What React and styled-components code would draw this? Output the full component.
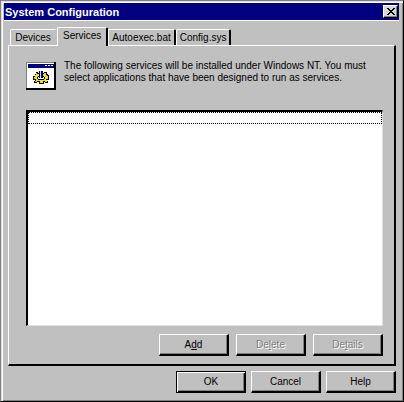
import React, { useState } from 'react';
import styled, { createGlobalStyle, css } from 'styled-components';

const GlobalStyle = createGlobalStyle`
  * {
    box-sizing: border-box;
  }

  body {
    margin: 0;
    background: #c0c0c0;
    color: #000;
    font: 10px/12px "Liberation Sans", Arial, sans-serif;
  }
`;

const raised = css`
  border: 1px solid;
  border-color: #fff #000 #000 #fff;
  box-shadow: inset -1px -1px #808080;
`;

const Dialog = styled.main`
  display: flex;
  flex-direction: column;
  min-height: 100vh;
  padding: 1px 2px 1px 2px;
  background: #c0c0c0;
  border: 1px solid;
  border-color: #808080 #000 #000 #808080;
  box-shadow: inset 1px 1px #dfdfdf, inset 2px 2px #fff, inset -1px -1px #808080;
`;

const TitleBar = styled.header`
  display: flex;
  align-items: center;
  justify-content: space-between;
  height: 18px;
  margin: 1px 2px 0 1px;
  padding: 0 1px;
  background: #000080;
  border-bottom: 1px solid #fff;
  color: #fff;
`;

const Title = styled.h1`
  margin: 0;
  font-size: 11px;
  line-height: 16px;
`;

const CloseButton = styled.button`
  display: flex;
  align-items: center;
  justify-content: center;
  width: 15px;
  height: 13px;
  padding: 0;
  background: #d8d8d0;
  ${raised}
`;

const Body = styled.div`
  display: flex;
  flex: 1;
  flex-direction: column;
  padding: 6px 5px 7px 5px;
`;

const TabList = styled.div`
  display: flex;
  align-items: flex-end;
  padding-left: 2px;
`;

const Tab = styled.button`
  height: ${props => (props.$active ? 19 : 16)}px;
  min-width: 47px;
  margin-bottom: ${props => (props.$active ? -1 : 0)}px;
  padding: ${props => (props.$active ? '0 5px 3px' : '0 3px')};
  position: relative;
  z-index: ${props => (props.$active ? 1 : 0)};
  background: #c0c0c0;
  border: solid;
  border-width: 1px 2px 0 1px;
  border-color: #fff #000 #fff #fff;
  border-radius: 2px 2px 0 0;
  font: inherit;
  white-space: nowrap;

  &:has(+ [aria-selected='true']) {
    border-right-color: #c0c0c0;
  }
`;

const Panel = styled.section`
  display: flex;
  flex: 1;
  flex-direction: column;
  padding: 14px 11px 8px 17px;
  border: solid;
  border-width: 1px 2px 2px 1px;
  border-color: #fff #000 #000 #fff;
`;

const Intro = styled.div`
  display: flex;
  gap: 8px;
  margin-bottom: 20px;
`;

const IntroIcon = styled.svg`
  flex: none;
  width: 30px;
  height: 28px;
  margin-top: 2px;
`;

const IntroText = styled.p`
  margin: 0;
`;

const ServiceList = styled.ul`
  flex: 1;
  margin: 0 0 8px;
  padding: 0;
  list-style: none;
  background: #fff;
  border: solid;
  border-width: 2px 1px 1px 2px;
  border-color: #000 #dfdfdf #dfdfdf #000;
  outline: none;
`;

const ServiceRow = styled.li`
  height: 12px;
  border: 1px dotted #000;
`;

const ButtonRow = styled.div`
  display: flex;
  justify-content: flex-end;
  gap: ${props => props.$gap}px;
  margin-top: ${props => props.$top || 0}px;
`;

const Button = styled.button`
  width: 70px;
  height: 22px;
  padding: 0;
  background: #c0c0c0;
  font: inherit;
  ${raised}
  border-width: 1px 2px 2px 1px;

  ${props =>
    props.$primary &&
    css`
      border: 1px solid #000;
      box-shadow: inset 1px 1px #fff, inset -1px -1px #000, inset -2px -2px #808080;
    `}

  &:disabled {
    color: #808080;
    text-shadow: 1px 1px #fff;
  }
`;

const tabs = ['Devices', 'Services', 'Autoexec.bat', 'Config.sys'];

const ServicesIcon = () => (
  <IntroIcon viewBox="0 0 30 28" shapeRendering="crispEdges" aria-hidden="true">
    <rect width="30" height="28" fill="#000" />
    <rect width="28" height="26" fill="#808080" />
    <rect x="1" y="1" width="27" height="25" fill="#fff" />
    <rect x="2" y="2" width="26" height="4" fill="#000080" />
    <path d="M19 3h2v1h-2zM22 3h2v1h-2zM25 3h2v1h-2z" fill="#fff" />
    <path
      d="M10 10h2v1h6v-1h3v2h1v1h1v5h-2v1h1v2h-3v-1h-1v2h-5v-2h-2v1H8v-2h1v-1H7v-4h2v-2h1z"
      fill="#000"
    />
    <path
      d="M10 11h1v1h7v-1h2v2h1v1h1v3h-2v1h1v2h-2v-1h-2v2h-3v-2h-3v1H9v-1h1v-2H8v-2h1v-2h1z"
      fill="#f0e010"
    />
    <path d="M12 14h6v1h1v2h-1v1h-6v-1h-1v-2h1z" fill="#000" />
    <path d="M12 15h6v2h-6z" fill="#fff" />
    <path d="M13 9h4v7h-4z" fill="#000080" />
    <path d="M14 9h1v7h-1z" fill="#d0d8ff" />
  </IntroIcon>
);

function App() {
  const [active, setActive] = useState('Services');

  return (
    <Dialog>
      <GlobalStyle />
      <TitleBar>
        <Title>System Configuration</Title>
        <CloseButton aria-label="Close">
          <svg width="8" height="7" viewBox="0 0 8 7" shapeRendering="crispEdges">
            <path
              d="M0 0h2v1H0zM6 0h2v1H6zM1 1h2v1H1zM5 1h2v1H5zM2 2h4v1H2zM3 3h2v1H3zM2 4h4v1H2zM1 5h2v1H1zM5 5h2v1H5zM0 6h2v1H0zM6 6h2v1H6z"
              fill="#000"
            />
          </svg>
        </CloseButton>
      </TitleBar>
      <Body>
        <TabList role="tablist">
          {tabs.map(name => (
            <Tab
              key={name}
              role="tab"
              aria-selected={name === active}
              $active={name === active}
              onClick={() => setActive(name)}
            >
              {name}
            </Tab>
          ))}
        </TabList>
        <Panel role="tabpanel" aria-label={active}>
          <Intro>
            <ServicesIcon />
            <IntroText>
              The following services will be installed under Windows NT. You must
              select applications that have been designed to run as services.
            </IntroText>
          </Intro>
          <ServiceList role="listbox" aria-label="Services" tabIndex={0}>
            <ServiceRow role="option" aria-selected={false} />
          </ServiceList>
          <ButtonRow $gap={7}>
            <Button>
              A<u>d</u>d
            </Button>
            <Button disabled>
              De<u>l</u>ete
            </Button>
            <Button disabled>
              De<u>t</u>ails
            </Button>
          </ButtonRow>
        </Panel>
        <ButtonRow $gap={5} $top={5}>
          <Button $primary>OK</Button>
          <Button>Cancel</Button>
          <Button>Help</Button>
        </ButtonRow>
      </Body>
    </Dialog>
  );
}

export default App;
